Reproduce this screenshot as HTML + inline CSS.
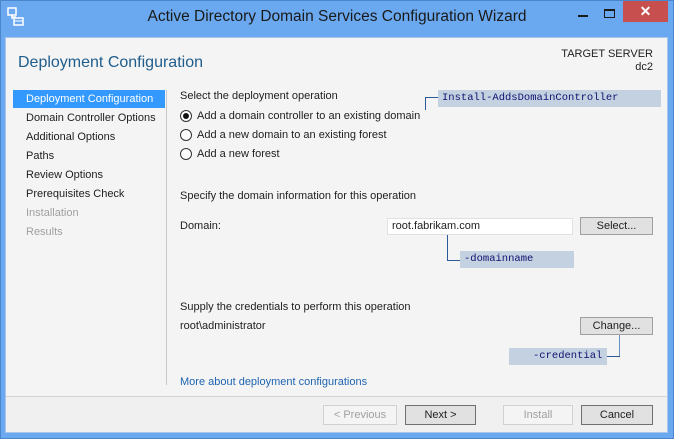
<!DOCTYPE html>
<html><head><style>
*{margin:0;padding:0;box-sizing:border-box}
body{width:674px;height:439px;overflow:hidden;background:#6aa9f0;font-family:"Liberation Sans",sans-serif;font-size:11px;color:#1e1e1e;position:relative}
.a{position:absolute;white-space:nowrap}
.win{left:0;top:0;width:674px;height:439px;border:1px solid #4a86cc}
.content{left:5px;top:37px;width:663px;height:396px;background:#f4f4f4;border:1px solid #a9c6ea}
.nav{left:26px;font-size:11px}
.btn{height:20px;border:1px solid #a0a0a0;background:#e1e1e1;text-align:center;line-height:18px;font-size:11px}
.mono{font-family:"Liberation Mono",monospace;color:#101070;background:#c3d1e1;font-size:10.5px;line-height:17px;height:17px;padding-left:4px}
.ln{background:#2c5a99}
.radio{width:12px;height:12px;border:1px solid #333;border-radius:50%;background:#fff}
</style></head><body>
<div class="a win"></div>
<svg class="a" style="left:7px;top:7px" width="18" height="20" viewBox="0 0 18 20"><rect x="1" y="1" width="8" height="7" fill="none" stroke="#fff" stroke-width="1.5"/><path d="M5 8v4M5 10h4" stroke="#fff" stroke-width="1.5"/><rect x="7" y="11" width="9" height="7" fill="none" stroke="#fff" stroke-width="1.5"/><path d="M7 14h9" stroke="#fff"/></svg>
<div class="a" style="left:0;width:674px;top:8px;text-align:center;font-size:15.5px;color:#1a1a1a">Active Directory Domain Services Configuration Wizard</div>
<div class="a" style="left:578px;top:15px;width:10px;height:2px;background:#1a1a1a"></div>
<div class="a" style="left:604px;top:9px;width:11px;height:9px;border:1px solid #1a1a1a;border-top-width:2px"></div>
<div class="a" style="left:623px;top:1px;width:45px;height:21px;background:#c7504f;color:#fff;text-align:center;font-size:14px;line-height:21px;font-weight:bold">✕</div>

<div class="a content"></div>
<div class="a" style="left:18px;top:54px;font-size:16px;color:#1f5d8c">Deployment Configuration</div>
<div class="a" style="right:21px;top:48px;text-align:right;font-size:11px;line-height:13px">TARGET SERVER<br>dc2</div>

<div class="a" style="left:13px;top:90px;width:152px;height:18px;background:#3399ff"></div>
<div class="a" style="left:166px;top:90px;width:1px;height:295px;background:#c8c8c8"></div>
<div class="a nav" style="top:93px;color:#fff">Deployment Configuration</div>
<div class="a nav" style="top:112px">Domain Controller Options</div>
<div class="a nav" style="top:131px">Additional Options</div>
<div class="a nav" style="top:150px">Paths</div>
<div class="a nav" style="top:169px">Review Options</div>
<div class="a nav" style="top:188px">Prerequisites Check</div>
<div class="a nav" style="top:207px;color:#a0a0a0">Installation</div>
<div class="a nav" style="top:226px;color:#a0a0a0">Results</div>

<div class="a" style="left:180px;top:90px">Select the deployment operation</div>
<div class="a radio" style="left:180px;top:110px"><div class="a" style="left:2px;top:2px;width:6px;height:6px;border-radius:50%;background:#111"></div></div>
<div class="a" style="left:197px;top:110px">Add a domain controller to an existing domain</div>
<div class="a radio" style="left:180px;top:129px"></div>
<div class="a" style="left:197px;top:129px">Add a new domain to an existing forest</div>
<div class="a radio" style="left:180px;top:148px"></div>
<div class="a" style="left:197px;top:148px">Add a new forest</div>

<div class="a ln" style="left:425px;top:97px;width:1px;height:13px"></div>
<div class="a ln" style="left:425px;top:97px;width:13px;height:1px"></div>
<div class="a mono" style="left:438px;top:90px;width:223px">Install-AddsDomainController</div>

<div class="a" style="left:180px;top:190px">Specify the domain information for this operation</div>
<div class="a" style="left:180px;top:220px">Domain:</div>
<div class="a" style="left:387px;top:218px;width:186px;height:17px;background:#fff;border:1px solid #e0e0e0;padding-left:4px;line-height:15px">root.fabrikam.com</div>
<div class="a btn" style="left:580px;top:217px;width:73px;height:18px;line-height:16px">Select...</div>
<div class="a ln" style="left:447px;top:235px;width:1px;height:25px"></div>
<div class="a ln" style="left:447px;top:260px;width:13px;height:1px"></div>
<div class="a mono" style="left:460px;top:251px;width:114px">-domainname</div>

<div class="a" style="left:180px;top:301px">Supply the credentials to perform this operation</div>
<div class="a" style="left:180px;top:320px">root\administrator</div>
<div class="a btn" style="left:580px;top:317px;width:73px;height:18px;line-height:16px">Change...</div>
<div class="a" style="left:619px;top:335px;width:1px;height:22px;background:#6b8fc0"></div>
<div class="a" style="left:607px;top:356px;width:13px;height:1px;background:#2c5a99"></div>
<div class="a mono" style="left:509px;top:348px;width:98px;padding-left:24px">-credential</div>

<div class="a" style="left:180px;top:376px;color:#1f64b0">More about deployment configurations</div>

<div class="a" style="left:6px;top:396px;width:661px;height:1px;background:#d4d4d4"></div>
<div class="a" style="left:6px;top:397px;width:661px;height:35px;background:#f0f0f0"></div>
<div class="a btn" style="left:323px;top:405px;width:74px;background:#f4f4f4;border-color:#d0d0d0;color:#a0a0a0">&lt; Previous</div>
<div class="a btn" style="left:405px;top:405px;width:71px;border-color:#707070">Next &gt;</div>
<div class="a btn" style="left:503px;top:405px;width:70px;background:#f4f4f4;border-color:#d0d0d0;color:#a0a0a0">Install</div>
<div class="a btn" style="left:581px;top:405px;width:72px;border-color:#707070">Cancel</div>
</body></html>
